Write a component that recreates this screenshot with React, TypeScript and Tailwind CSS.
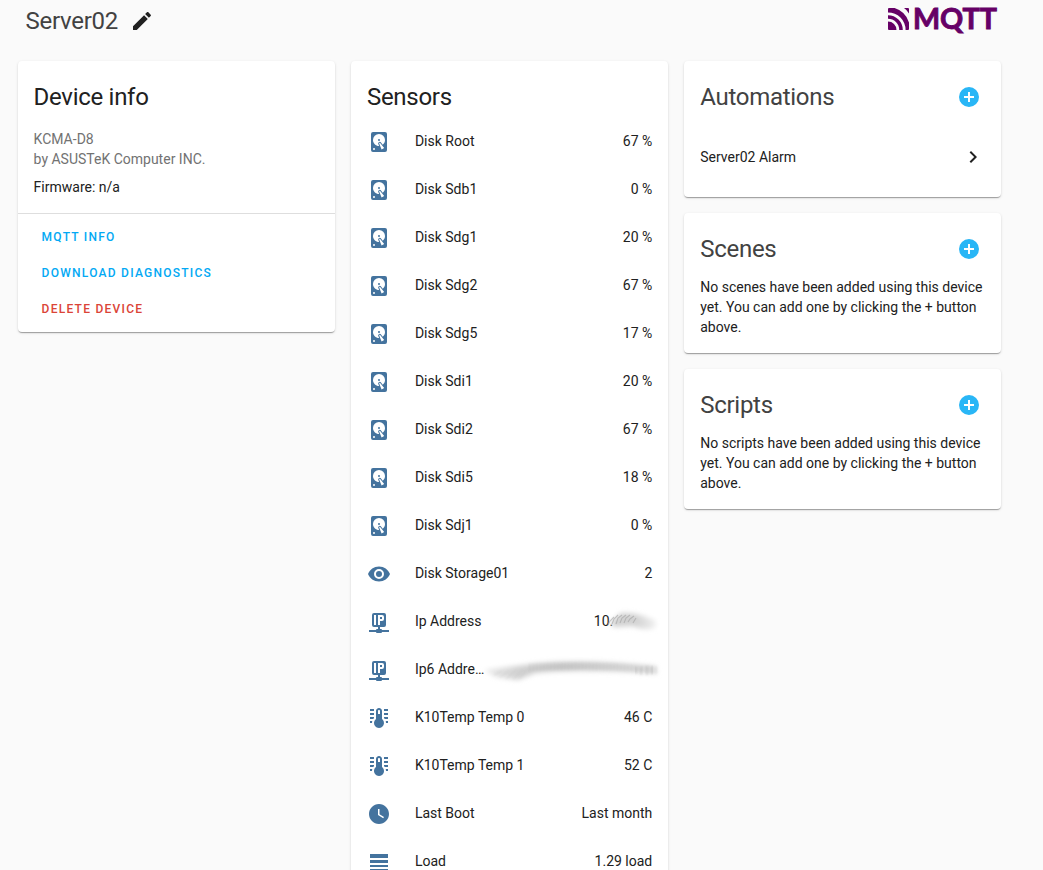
import React from "react";

const paths = {
  disk: "M6,2H18A2,2 0 0,1 20,4V20A2,2 0 0,1 18,22H6A2,2 0 0,1 4,20V4A2,2 0 0,1 6,2M12,4A6,6 0 0,0 6,10C6,13.31 8.69,16 12.1,16L11.22,13.77C10.95,13.29 11.11,12.68 11.59,12.4L12.45,11.9C12.93,11.63 13.54,11.79 13.82,12.27L15.74,14.69C17.12,13.59 18,11.9 18,10A6,6 0 0,0 12,4M12,9A1,1 0 0,1 13,10A1,1 0 0,1 12,11A1,1 0 0,1 11,10A1,1 0 0,1 12,9M7,18A1,1 0 0,0 6,19A1,1 0 0,0 7,20A1,1 0 0,0 8,19A1,1 0 0,0 7,18M12.09,13.27L14.58,19.58L17.17,18.08L12.95,12.77L12.09,13.27Z",
  eye: "M12,9A3,3 0 0,0 9,12A3,3 0 0,0 12,15A3,3 0 0,0 15,12A3,3 0 0,0 12,9M12,17A5,5 0 0,1 7,12A5,5 0 0,1 12,7A5,5 0 0,1 17,12A5,5 0 0,1 12,17M12,4.5C7,4.5 2.73,7.61 1,12C2.73,16.39 7,19.5 12,19.5C17,19.5 21.27,16.39 23,12C21.27,7.61 17,4.5 12,4.5Z",
  ip: "M17,3A2,2 0 0,1 19,5V15A2,2 0 0,1 17,17H13V19H14A1,1 0 0,1 15,20H22V22H15A1,1 0 0,1 14,23H10A1,1 0 0,1 9,22H2V20H9A1,1 0 0,1 10,19H11V17H7A2,2 0 0,1 5,15V5A2,2 0 0,1 7,3H17M7,5V15H9V5H7M11,5V15H13V11H15A2,2 0 0,0 17,9V7A2,2 0 0,0 15,5H11M13,7H15V9H13V7Z",
  temp: "M17 3H21V5H17V3M17 7H21V9H17V7M17 11H21V13H17.75L17 12.1V11M21 15V17H19C19 16.31 18.9 15.63 18.71 15H21M7 3V5H3V3H7M7 7V9H3V7H7M7 11V12.1L6.25 13H3V11H7M3 15H5.29C5.1 15.63 5 16.31 5 17H3V15M15 13V5C15 3.34 13.66 2 12 2S9 3.34 9 5V13C6.79 14.66 6.34 17.79 8 20S12.79 22.66 15 21 17.66 16.21 16 14C15.72 13.62 15.38 13.28 15 13M12 4C12.55 4 13 4.45 13 5V8H11V5C11 4.45 11.45 4 12 4Z",
  clock: "M12 2C6.5 2 2 6.5 2 12C2 17.5 6.5 22 12 22C17.5 22 22 17.5 22 12S17.5 2 12 2M16.2 16.2L11 13V7H12.5V12.2L17 14.9L16.2 16.2Z",
  load: "M3,4H21V8H3V4M3,10H21V13H3V10M3,15H21V17H3V15M3,19H21V20H3V19Z",
  pencil: "M20.71,7.04C21.1,6.65 21.1,6 20.71,5.63L18.37,3.29C18,2.9 17.35,2.9 16.96,3.29L15.12,5.12L18.87,8.87M3,17.25V21H6.75L17.81,9.93L14.06,6.18L3,17.25Z",
  plus: "M17,13H13V17H11V13H7V11H11V7H13V11H17M12,2A10,10 0 0,0 2,12A10,10 0 0,0 12,22A10,10 0 0,0 22,12A10,10 0 0,0 12,2Z",
  chevron: "M8.59,16.58L13.17,12L8.59,7.41L10,6L16,12L10,18L8.59,16.58Z",
};

type IconName = keyof typeof paths;

function Icon({ name, className = "" }: { name: IconName; className?: string }) {
  return (
    <svg viewBox="0 0 24 24" className={`size-6 shrink-0 fill-current ${className}`}>
      <path d={paths[name]} />
    </svg>
  );
}

const sensors: { icon: IconName; name: string; value: React.ReactNode }[] = [
  { icon: "disk", name: "Disk Root", value: "67 %" },
  { icon: "disk", name: "Disk Sdb1", value: "0 %" },
  { icon: "disk", name: "Disk Sdg1", value: "20 %" },
  { icon: "disk", name: "Disk Sdg2", value: "67 %" },
  { icon: "disk", name: "Disk Sdg5", value: "17 %" },
  { icon: "disk", name: "Disk Sdi1", value: "20 %" },
  { icon: "disk", name: "Disk Sdi2", value: "67 %" },
  { icon: "disk", name: "Disk Sdi5", value: "18 %" },
  { icon: "disk", name: "Disk Sdj1", value: "0 %" },
  { icon: "eye", name: "Disk Storage01", value: "2" },
  { icon: "ip", name: "Ip Address", value: <ShortSmudge /> },
  { icon: "ip", name: "Ip6 Addre…", value: <LongSmudge /> },
  { icon: "temp", name: "K10Temp Temp 0", value: "46 C" },
  { icon: "temp", name: "K10Temp Temp 1", value: "52 C" },
  { icon: "clock", name: "Last Boot", value: "Last month" },
  { icon: "load", name: "Load", value: "1.29 load" },
];

function ShortSmudge() {
  return (
    <span className="flex items-center">
      10.
      <svg viewBox="0 0 50 24" className="-mr-[7px] -ml-1 h-6 w-[50px] overflow-visible">
        <defs>
          <linearGradient id="fadeShort">
            <stop offset="0" stopColor="#d0d0d0" />
            <stop offset=".55" stopColor="#d2d2d2" />
            <stop offset="1" stopColor="#f0f0f0" />
          </linearGradient>
          <filter id="softShort" x="-20%" y="-100%" width="140%" height="300%">
            <feGaussianBlur stdDeviation="2.8" />
          </filter>
          <filter id="fineShort">
            <feGaussianBlur stdDeviation="0.7" />
          </filter>
        </defs>
        <path d="M1 14L12 4Q29 3 47 12L46 19Q34 22 24 17L5 18Z" fill="url(#fadeShort)" filter="url(#softShort)" />
        <path d="M-1 16L1 12L5 8M3 15L5 10L9 6M7 15L9 9L13 6M11 14L13 9L17 6M15 14L17 9L21 6M19 13L21 10L25 7M24 14L27 9" fill="none" stroke="#a4a4a4" strokeWidth="1.1" opacity=".6" filter="url(#fineShort)" />
      </svg>
    </span>
  );
}

function LongSmudge() {
  const ticks = Array.from({ length: 37 }, (_, i) => {
    const x = 44 + i * 3.5;
    const y = 12 + Math.pow((x - 92) / 78, 2) * 4;
    return `M${x} ${y - 4}V${y + 4}`;
  }).join("");
  return (
    <svg viewBox="0 0 174 30" className="-mr-2 h-[30px] w-[174px] overflow-visible">
      <defs>
        <linearGradient id="fadeLong">
          <stop offset="0" stopColor="#ececec" />
          <stop offset=".2" stopColor="#d2d2d2" />
          <stop offset=".45" stopColor="#c6c6c6" />
          <stop offset="1" stopColor="#dedede" />
        </linearGradient>
        <filter id="softLong" x="-10%" y="-80%" width="120%" height="260%">
          <feGaussianBlur stdDeviation="2.6" />
        </filter>
        <filter id="fineLong" x="-5%" y="-50%" width="110%" height="200%">
          <feGaussianBlur stdDeviation="0.8" />
        </filter>
      </defs>
      <path d="M-2 16L38 11Q90 4 170 12L171 20Q90 14 49 19L32 26L10 23Z" fill="url(#fadeLong)" filter="url(#softLong)" />
      <path d="M8 21L16 17M14 23L23 17M20 25L30 16M27 25L37 15M34 24L42 14" stroke="#b8b8b8" strokeWidth="1" opacity=".35" filter="url(#fineLong)" />
      <path d={ticks} fill="none" stroke="#999" strokeWidth="1.1" opacity=".3" filter="url(#fineLong)" />
      <path d="M150 13V20M155 13V21M161 12V21M166 12V20" stroke="#888" strokeWidth="1" opacity=".45" filter="url(#fineLong)" />
    </svg>
  );
}

function MqttLogo() {
  return (
    <svg viewBox="0 0 112 30" className="mt-[7px] h-[30px] w-28 overflow-visible">
      <g fill="#660066">
        <path d="M1 14.5A8.5 8.5 0 0 1 9.5 23H2A1 1 0 0 1 1 22ZM17 1H21A1 1 0 0 1 22 2V6.5Q20 3 17 1Z" />
        <path d="M1 8.2V11.8A11.2 11.2 0 0 1 12.2 23H15.8A14.8 14.8 0 0 0 1 8.2ZM1 2V5.4A17.6 17.6 0 0 1 18.6 23H21A1 1 0 0 0 22 22V15.4A22 22 0 0 0 7.6 1H2A1 1 0 0 0 1 2Z" />
      </g>
      <text x="26" y="22.4" textLength="84" lengthAdjust="spacingAndGlyphs" fill="#660066" stroke="#660066" strokeWidth=".9" className="font-[Lato] text-[29px] font-bold">
        MQTT
      </text>
    </svg>
  );
}

function Card({ className = "", children }: { className?: string; children: React.ReactNode }) {
  return (
    <section className={`rounded bg-white shadow-[0_2px_1px_-1px_rgba(0,0,0,0.2),0_1px_1px_0_rgba(0,0,0,0.14),0_1px_3px_0_rgba(0,0,0,0.12)] ${className}`}>
      {children}
    </section>
  );
}

function CardTitle({ title }: { title: string }) {
  return (
    <div className="flex items-center justify-between text-2xl leading-8 tracking-[-0.012em] text-[#424242]">
      <h2>{title}</h2>
      <Icon name="plus" className="mr-1 text-[#29b6f6]" />
    </div>
  );
}

function EmptyCard({ title, kind }: { title: string; kind: string }) {
  return (
    <Card className="h-[140px] px-4 pt-5">
      <CardTitle title={title} />
      <p className="mt-3 text-sm leading-5">
        {`No ${kind} have been added using this device yet. You can add one by clicking the + button above.`}
      </p>
    </Card>
  );
}

export default function App() {
  return (
    <main className="h-[870px] overflow-hidden bg-[#fafafa] font-[Roboto,sans-serif] text-sm text-[#212121]">
      <header className="flex h-[61px] items-start justify-between pr-11 pl-[25.6px]">
        <div className="flex items-center gap-3 pt-[5px]">
          <h1 className="text-2xl leading-8 tracking-[-0.012em] text-[#424242]">Server02</h1>
          <Icon name="pencil" />
        </div>
        <MqttLogo />
      </header>
      <div className="flex items-start gap-4 pl-[17.6px]">
        <Card className="h-[271px] w-[317.33px] shrink-0">
          <div className="h-[153px] border-b border-[#dedede] px-4 pt-5">
            <h2 className="text-2xl leading-8 tracking-[-0.012em]">Device info</h2>
            <p className="mt-4 leading-5 text-[#727272]">
              KCMA-D8
              <br />
              by ASUSTeK Computer INC.
            </p>
            <p className="mt-2 leading-5">Firmware: n/a</p>
          </div>
          <div className="flex flex-col items-start px-6 pt-[5px] text-xs font-medium tracking-[1.25px] text-[#03a9f4]">
            <button className="h-9">MQTT INFO</button>
            <button className="h-9">DOWNLOAD DIAGNOSTICS</button>
            <button className="h-9 text-[#db4437]">DELETE DEVICE</button>
          </div>
        </Card>
        <Card className="h-[840px] w-[317.33px] shrink-0 px-4 pt-5">
          <h2 className="text-2xl leading-8 tracking-[-0.012em]">Sensors</h2>
          <ul className="mt-1">
            {sensors.map((s) => (
              <li key={s.name} className="flex h-12 items-center">
                <Icon name={s.icon} className="mt-0.5 text-[#44739e]" />
                <span className="ml-6 grow whitespace-nowrap">{s.name}</span>
                <span className="whitespace-nowrap">{s.value}</span>
              </li>
            ))}
          </ul>
        </Card>
        <div className="flex w-[317px] shrink-0 flex-col gap-4">
          <Card className="h-[136px] px-4 pt-5">
            <CardTitle title="Automations" />
            <div className="mt-5 flex h-12 items-center justify-between">
              <span>Server02 Alarm</span>
              <Icon name="chevron" />
            </div>
          </Card>
          <EmptyCard title="Scenes" kind="scenes" />
          <EmptyCard title="Scripts" kind="scripts" />
        </div>
      </div>
    </main>
  );
}
